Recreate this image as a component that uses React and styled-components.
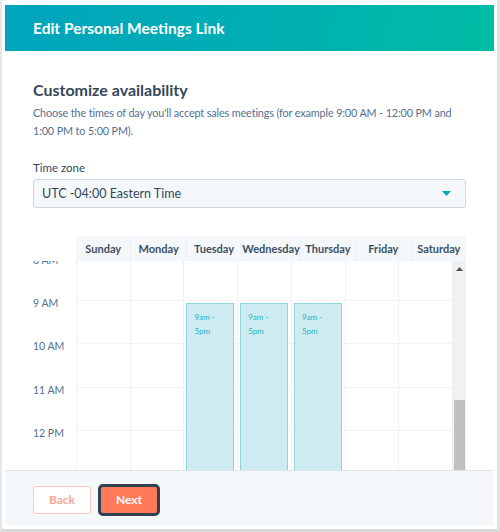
import React, { useLayoutEffect, useRef } from "react";
import styled, { createGlobalStyle } from "styled-components";

const HOUR = 43.33;
const DAYS = ["Sunday", "Monday", "Tuesday", "Wednesday", "Thursday", "Friday", "Saturday"];
const HOURS = Array.from({ length: 24 }, (_, i) => i);
const EVENTS = { 2: [9, 17], 3: [9, 17], 4: [9, 17] };
const SCROLL_TOP = 8 * HOUR + 4;

const hourLabel = (h) => {
  if (h === 0) return "12 AM";
  if (h === 12) return "12 PM";
  return h < 12 ? `${h} AM` : `${h - 12} PM`;
};

const GlobalStyle = createGlobalStyle`
  html, body { margin: 0; padding: 0; background: #ffffff; }
  body { font-family: Lato, "Open Sans", sans-serif; color: #33475b; }
  * { box-sizing: border-box; }
`;

const Frame = styled.div`
  width: 500px;
  height: 532px;
  padding: 5px 3px 4px 3px;
  border-left: 2px solid #e6e6e6;
  border-right: 3px solid #e2e2e2;
  border-bottom: 3px solid #dadada;
  display: flex;
`;

const Modal = styled.div`
  flex: 1;
  display: flex;
  flex-direction: column;
  background: #fff;
  min-width: 0;
`;

const Header = styled.div`
  height: 46px;
  flex: none;
  display: flex;
  align-items: center;
  padding: 0 28px;
  background: linear-gradient(100deg, #00a4bd 0%, #00afb2 55%, #00bda5 100%);
`;

const HeaderTitle = styled.h1`
  margin: 0;
  font-size: 15.5px;
  font-weight: 700;
  color: #ffffff;
`;

const Body = styled.div`
  flex: 1;
  min-height: 0;
  overflow: hidden;
  padding: 27px 28px 0 28px;
  display: flex;
  flex-direction: column;
  & > * { flex-shrink: 0; }
`;

const Title = styled.h2`
  margin: 0;
  font-size: 16px;
  line-height: 24px;
  font-weight: 700;
  color: #33475b;
`;

const Description = styled.p`
  margin: 2px 0 0 0;
  font-size: 10.8px;
  line-height: 18px;
  letter-spacing: -0.12px;
  color: #516f90;
`;

const FieldLabel = styled.label`
  display: block;
  margin-top: 20px;
  font-size: 11.5px;
  line-height: 16px;
  color: #33475b;
`;

const Select = styled.div`
  margin-top: 3px;
  height: 29px;
  display: flex;
  align-items: center;
  justify-content: space-between;
  padding: 0 14px 0 8px;
  background: #f5f8fa;
  border: 1px solid #cbd6e2;
  border-radius: 3px;
  font-size: 12.5px;
  color: #33475b;
`;

const Calendar = styled.div`
  margin-top: 28px;
  display: flex;
  flex-direction: column;
`;

const HeadRow = styled.div`
  display: flex;
  height: 25px;
  padding-left: 43px;
`;

const HeadCell = styled.div`
  flex: 1;
  display: flex;
  align-items: center;
  justify-content: center;
  background: #f5f8fa;
  border-left: 1px solid #eaf0f6;
  font-size: 11px;
  font-weight: 700;
  color: #3b4f63;
  white-space: nowrap;
  &:first-child { border-left: none; }
`;

const BodyRow = styled.div`
  display: flex;
  height: 260px;
`;

const Viewport = styled.div`
  flex: 1;
  overflow: hidden;
`;

const ScrollTrack = styled.div`
  width: 14px;
  flex: none;
  background: #f1f1f1;
  display: flex;
  flex-direction: column;
  align-items: center;
`;

const ScrollArrow = styled.div`
  height: 15px;
  width: 100%;
  display: flex;
  align-items: center;
  justify-content: center;
`;

const ScrollThumb = styled.div`
  width: 11px;
  margin-top: ${(p) => p.$offset}px;
  height: ${(p) => p.$size}px;
  background: #c1c1c1;
`;

const Grid = styled.div`
  display: flex;
`;

const TimeColumn = styled.div`
  width: 43px;
  flex: none;
  display: flex;
  flex-direction: column;
`;

const TimeSlot = styled.div`
  height: ${HOUR}px;
  font-size: 10.5px;
  line-height: 13px;
  color: #516f90;
  white-space: nowrap;
  & > span { display: block; margin-top: -3px; }
`;

const DayColumn = styled.div`
  flex: 1;
  position: relative;
  border-left: 1px solid #eef2f7;
  display: flex;
  flex-direction: column;
`;

const Slot = styled.div`
  height: ${HOUR}px;
  border-top: 1px solid #f0f3f7;
`;

const Event = styled.div`
  position: absolute;
  left: 2px;
  right: 3px;
  background: #cdebf0;
  border: 1px solid #8fd6e0;
  padding: 6px 0 0 7px;
  font-size: 8px;
  line-height: 14px;
  color: #1fb3c6;
`;

const Footer = styled.div`
  flex: none;
  height: 55px;
  display: flex;
  align-items: center;
  gap: 7px;
  padding: 3px 28px 0 28px;
  background: #f5f8fa;
  border-top: 1px solid #dfe3eb;
`;

const Button = styled.button`
  font-family: Lato, "Open Sans", sans-serif;
  font-size: 12px;
  font-weight: 700;
  cursor: pointer;
  height: ${(p) => (p.$primary ? 32 : 28)}px;
  width: ${(p) => (p.$primary ? 62 : 58)}px;
  padding: 0;
  background: ${(p) => (p.$primary ? "#ff7a59" : "#ffffff")};
  color: ${(p) => (p.$primary ? "#ffffff" : "#ffa68f")};
  border: ${(p) => (p.$primary ? "3px solid #2f4153" : "1px solid #ffc7b8")};
  border-radius: ${(p) => (p.$primary ? 5 : 3)}px;
`;

export default function App() {
  const ref = useRef(null);
  useLayoutEffect(() => {
    if (ref.current) ref.current.scrollTop = SCROLL_TOP;
  }, []);
  return (
    <>
      <GlobalStyle />
      <Frame>
        <Modal>
          <Header>
            <HeaderTitle>Edit Personal Meetings Link</HeaderTitle>
          </Header>
          <Body>
            <Title>Customize availability</Title>
            <Description>
              Choose the times of day you'll accept sales meetings (for example 9:00 AM - 12:00 PM and 1:00 PM to 5:00 PM).
            </Description>
            <FieldLabel>Time zone</FieldLabel>
            <Select>
              <span>UTC -04:00 Eastern Time</span>
              <svg width="9" height="5" viewBox="0 0 9 5">
                <path d="M0 0 L9 0 L4.5 5 Z" fill="#00a4bd" />
              </svg>
            </Select>
            <Calendar>
              <HeadRow>
                {DAYS.map((d) => (
                  <HeadCell key={d}>{d}</HeadCell>
                ))}
              </HeadRow>
              <BodyRow>
                <Viewport ref={ref}>
                  <Grid>
                    <TimeColumn>
                      {HOURS.map((h) => (
                        <TimeSlot key={h}>
                          <span>{hourLabel(h)}</span>
                        </TimeSlot>
                      ))}
                    </TimeColumn>
                    {DAYS.map((d, i) => (
                      <DayColumn key={d}>
                        {HOURS.map((h) => (
                          <Slot key={h} />
                        ))}
                        {EVENTS[i] && (
                          <Event
                            style={{
                              top: EVENTS[i][0] * HOUR + 3,
                              height: (EVENTS[i][1] - EVENTS[i][0]) * HOUR - 3,
                            }}
                          >
                            9am -<br />5pm
                          </Event>
                        )}
                      </DayColumn>
                    ))}
                  </Grid>
                </Viewport>
                <ScrollTrack>
                  <ScrollArrow>
                    <svg width="7" height="4" viewBox="0 0 7 4">
                      <path d="M0 4 L7 4 L3.5 0 Z" fill="#505050" />
                    </svg>
                  </ScrollArrow>
                  <ScrollThumb $offset={124} $size={120} />
                </ScrollTrack>
              </BodyRow>
            </Calendar>
          </Body>
          <Footer>
            <Button>Back</Button>
            <Button $primary>Next</Button>
          </Footer>
        </Modal>
      </Frame>
    </>
  );
}
